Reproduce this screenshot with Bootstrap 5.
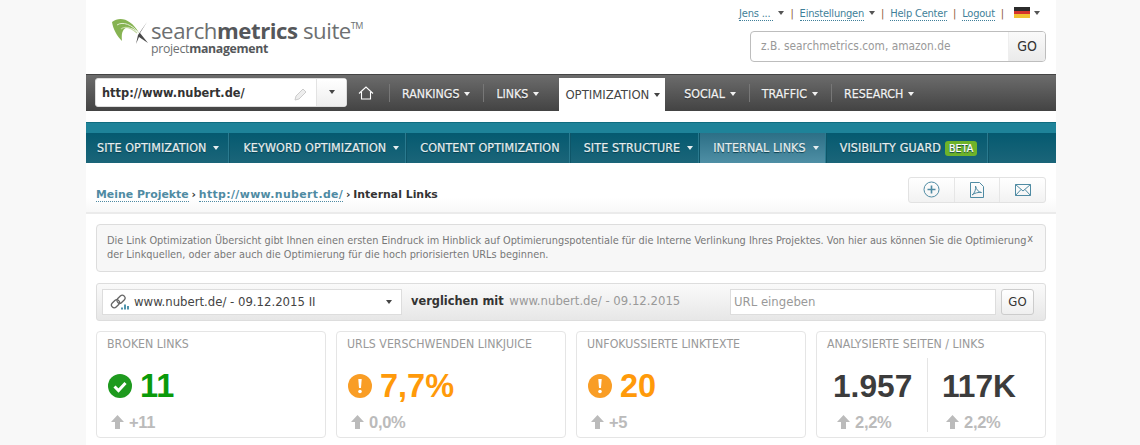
<!DOCTYPE html>
<html lang="de"><head><meta charset="utf-8">
<link href="https://cdn.jsdelivr.net/npm/bootstrap@5.3.0/dist/css/bootstrap.min.css" rel="stylesheet">
<style>
html,body{height:445px;overflow:hidden;}
body{background:#f8f8f8;font-family:"DejaVu Sans Condensed","DejaVu Sans",sans-serif;font-stretch:condensed;font-size:12px;color:#444;}
.sheet{margin-left:86px;width:970px;height:445px;background:#fff;}
.topzone{height:74px;}
.logo-mark{margin:17px 0 0 25px;}
.logo-txt{padding-top:2px;margin-left:3px;}
.logo-main{font-family:"Open Sans",sans-serif;font-stretch:normal;font-size:22.2px;line-height:24px;color:#6d6f71;letter-spacing:-.45px;white-space:nowrap;}
.logo-main b{font-weight:700;color:#55575a;}
.logo-main sup{font-size:9px;top:-1.1em;line-height:0;}
.logo-sub{font-family:"Open Sans",sans-serif;font-stretch:normal;font-size:12.3px;line-height:11px;color:#6d6f71;letter-spacing:-.3px;}
.logo-sub b{color:#55575a;}
.toplinks{height:27px;padding:6px 16px 0 0;font-size:11px;letter-spacing:-.2px;color:#555;white-space:nowrap;}
.toplinks a{color:#3f7f99;text-decoration:none;border-bottom:1px dotted #3f7f99;line-height:14px;}
.sep{margin:0 6px;color:#8a5a3a;}
.caretx{display:inline-block;border-left:3.5px solid transparent;border-right:3.5px solid transparent;border-top:4px solid currentColor;vertical-align:2px;margin-left:5px;}
.flagx{display:inline-block;width:16px;height:11px;background:linear-gradient(#2b2b2b 33%,#d5342c 33% 66%,#f1c232 66%);vertical-align:-1px;margin-left:4px;}
.searchbox{width:296px;height:31px;margin:4px 10px 0 auto;border:1px solid #bdbdbd;border-radius:4px;overflow:hidden;}
.searchbox .fake{flex:1;padding:0 10px;line-height:29px;color:#999;font-size:11.8px;white-space:nowrap;}
.searchbox .gox{width:37px;text-align:center;line-height:29px;font-size:14px;color:#333;background:linear-gradient(#fafafa,#eaeaea);border-left:1px solid #eee;}
.mainbar{height:37px;background:linear-gradient(#6c6c6c,#434343);border-top:1px solid #444;}
.urlpick{width:252px;height:29px;margin:3px 0 0 9px;background:#fff;border:1px solid #ddd;border-radius:3px;}
.urlpick .u{flex:1;padding-left:6px;line-height:29px;font-family:"DejaVu Sans",sans-serif;font-stretch:normal;font-weight:700;font-size:11.4px;color:#333;}
.urlpick .d{width:30px;border-left:1px solid #e3e3e3;background:linear-gradient(#fff,#eee);color:#444;text-align:center;line-height:26px;}
.homeit{width:42px;padding-left:11px;padding-top:8px;}
.tabm{height:36px;line-height:38px;padding:0 13px 0 13px;color:#f2f2f2;font-size:12.3px;-webkit-text-stroke:.25px #f2f2f2;background:linear-gradient(#777,#777) no-repeat left 9px/1px 18px;text-shadow:0 1px 1px #222;white-space:nowrap;}
.tabm.cur{background:#fff;color:#444;-webkit-text-stroke:0;text-shadow:none;height:33px;line-height:34px;margin:3px 6px 0 7px;padding:0 5px 0 6px;font-size:13px;}
.tabm.nosep{background:none;padding-left:13px;}
.gapstrip{height:11px;}
.subbar{height:41px;background:linear-gradient(#1e8399 0,#1e8399 10px,#055a70 10px,#1b6579 100%);border-top:1px solid #0f6d80;padding-top:10px;}
.tabs{height:30px;line-height:30px;padding:0 10px 0 13px;color:#e6eef0;font-size:12.4px;letter-spacing:.1px;-webkit-text-stroke:.2px #e6eef0;border-right:1px solid #0e5568;box-shadow:inset -1px 0 0 #2a7a8f;white-space:nowrap;text-shadow:0 1px 1px #0a3c4a;}
.tabs.car{padding-right:7px;}
.tabs.car .caretx{margin-left:7px;}
.tabs.firsty{padding-left:11px;padding-right:10px;}
.tabs.tight{padding-right:6px;}
.tabs.betatab{padding-right:11px;}
.tabs.on{background:linear-gradient(#2c6f86,#4f8fa5);}
.betax{background:#6eb32a;color:#fff;border-radius:3px;padding:1px 4px;font-size:10.6px;line-height:13px;margin-left:4px;display:inline-block;-webkit-text-stroke:.2px #fff;}
.crumbs{height:51px;padding:5px 10px 0;border-bottom:2px solid #ebebeb;background:linear-gradient(#fff 70%,#f8f8f8);}
.crumbtxt{font-family:"DejaVu Sans",sans-serif;font-stretch:normal;font-weight:700;font-size:10.9px;color:#333;padding-top:10px;}
.crumbtxt a{color:#4f8ba3;text-decoration:none;border-bottom:1px dotted #4f8ba3;}
.crumbtxt a.wideurl{letter-spacing:.38px;}
.crumbtxt span{margin:0 -1px;}
.acts{width:138px;height:26px;border:1px solid #e2e2e2;border-radius:3px;background:linear-gradient(#fff,#f2f2f2);margin-top:-1px;}
.acts span{flex:1;border-right:1px solid #e6e6e6;display:flex;align-items:center;justify-content:center;}
.acts span:last-child{border-right:0;}
.infox{margin:10px 10px 0;height:48px;background:#f7f7f7;border:1px solid #ddd;border-radius:4px;padding:9px 18px 0 10px;font-size:10.85px;line-height:13.5px;color:#777;position:relative;}
.infox i{position:absolute;right:12px;top:7px;font-style:normal;color:#777;}
.cmpbar{margin:11px 10px 0;height:38px;border:1px solid #ddd;border-radius:3px;background:linear-gradient(#fafafa,#e7e7e7);padding:5px 11px 5px 5px;}
.pickx{width:300px;height:26px;background:#fff;border:1px solid #ddd;padding:0 9px 0 7px;font-size:13px;line-height:24px;color:#444;}
.cmpx{font-size:13px;margin-left:9px;color:#999;white-space:nowrap;line-height:24px;}
.cmpx b{font-family:"DejaVu Sans",sans-serif;font-stretch:normal;color:#333;font-size:11.4px;margin-right:2px;}
.urlfake{width:266px;height:26px;background:#fff;border:1px solid #ddd;margin-left:auto;padding-left:3px;line-height:24px;font-size:13px;color:#999;}
.gobtn{width:33px;height:26px;margin-left:5px;background:linear-gradient(#fff,#efefef);border:1px solid #ccc;border-radius:3px;text-align:center;line-height:24px;font-size:13px;color:#333;}
.kpis{margin:10px 10px 0;gap:10px;}
.kpi{flex:1 1 0;height:107px;border:1px solid #e5e5e5;border-radius:4px;padding:4px 10px;min-width:0;background:#fff;}
.kpih{font-size:12.25px;line-height:16px;color:#999;white-space:nowrap;}
.bign{font-family:"Liberation Sans",Arial,sans-serif;font-stretch:normal;font-weight:700;font-size:32.5px;line-height:38px;}
.subn{font-family:"Liberation Sans",Arial,sans-serif;font-stretch:normal;font-weight:700;font-size:16.5px;letter-spacing:-.3px;line-height:20px;color:#bbb;}
.g{color:#0a9a0a}.o{color:#ff9a0a}.k{color:#3c3c3c;font-size:31.7px;}
.kv{margin-top:15px;gap:8px;padding-left:1px;}
.ks{margin-top:7px;gap:5px;padding-left:4px;}
.splitl{width:100px;margin-top:6px;padding:9px 0 0 6px;}
.splitr{flex:1;margin-top:6px;padding:9px 0 0 14px;border-left:1px solid #e5e5e5;}
.mk{flex:none;}
</style></head><body>
<div class="sheet">
 <div class="topzone d-flex justify-content-between">
  <div class="logo-mark d-flex">
   <svg width="37" height="28" viewBox="0 0 37 28" class="mk"><path d="M1 5C9-1 20 2 28 16 20 8 9 7 11 24 6 19 2 12 1 5Z" fill="#86b352"/><path d="M6 8C12 4 21 8 27 15" stroke="#e3eed4" stroke-width="1" fill="none"/><path d="M10 12C14 9 20 11 26 16" stroke="#c3daa2" stroke-width="1.200" fill="none"/><path d="M36 5 29 16 37 26 28 20 25 27 27 18Z" fill="#4a4a4a"/></svg>
   <div class="logo-txt"><div class="logo-main">search<b>metrics</b> suite<sup>TM</sup></div><div class="logo-sub">project<b>management</b></div></div>
  </div>
  <div class="d-flex flex-column">
   <div class="toplinks text-end"><a href="#">Jens ...&nbsp;</a><span class="caretx"></span><span class="sep">|</span><a href="#">Einstellungen</a><span class="caretx"></span><span class="sep">|</span><a href="#">Help Center</a><span class="sep">|</span><a href="#">Logout</a><span class="sep">|</span><span class="flagx"></span><span class="caretx ms-1"></span></div>
   <div class="searchbox d-flex"><div class="fake">z.B. searchmetrics.com, amazon.de</div><div class="gox">GO</div></div>
  </div>
 </div>
 <div class="mainbar d-flex">
  <div class="urlpick d-flex"><div class="u">http://www.nubert.de/</div>
   <svg width="14" height="14" viewBox="0 0 14 14" class="me-2 mt-2"><path d="M1 13l1-4 7-7 3 3-7 7z" fill="#eee" stroke="#ccc"/></svg>
   <div class="d"><span class="caretx m-0"></span></div></div>
  <div class="homeit"><svg width="16" height="14" viewBox="0 0 16 14"><path d="M1 7.500 8 1l7 6.500M3.500 6v7h9V6" fill="none" stroke="#fff" stroke-width="1.100"/></svg></div>
  <div class="tabm">RANKINGS<span class="caretx"></span></div>
  <div class="tabm">LINKS<span class="caretx"></span></div>
  <div class="tabm cur">OPTIMIZATION<span class="caretx"></span></div>
  <div class="tabm nosep">SOCIAL<span class="caretx"></span></div>
  <div class="tabm">TRAFFIC<span class="caretx"></span></div>
  <div class="tabm">RESEARCH<span class="caretx"></span></div>
 </div>
 <div class="gapstrip"></div>
 <div class="subbar d-flex">
  <div class="tabs car firsty">SITE OPTIMIZATION<span class="caretx"></span></div>
  <div class="tabs car">KEYWORD OPTIMIZATION<span class="caretx"></span></div>
  <div class="tabs">CONTENT OPTIMIZATION</div>
  <div class="tabs car tight">SITE STRUCTURE<span class="caretx"></span></div>
  <div class="tabs on car">INTERNAL LINKS<span class="caretx"></span></div>
  <div class="tabs betatab">VISIBILITY GUARD<span class="betax">BETA</span></div>
 </div>
 <div class="crumbs d-flex justify-content-between align-items-center">
  <div class="crumbtxt"><a href="#">Meine Projekte</a> <span>›</span> <a href="#" class="wideurl">http://www.nubert.de/</a> <span>›</span> Internal Links</div>
  <div class="acts d-flex">
   <span><svg width="17" height="17" viewBox="0 0 17 17"><circle cx="8.500" cy="8.500" r="7.500" fill="none" stroke="#4f8ba3"/><path d="M8.500 4.500v8M4.500 8.500h8" stroke="#4f8ba3" stroke-width="1.600"/></svg></span>
   <span><svg width="14" height="16" viewBox="0 0 14 16"><path d="M.5.500h9l4 4v11H.5zM2 13c3-2 4-6 3.500-9 1 4 3 6 6 6.500-3-.5-7 .5-9.500 2.500" fill="none" stroke="#4f8ba3"/></svg></span>
   <span><svg width="16" height="12" viewBox="0 0 16 12"><path d="M.5.500h15v11H.5zM.5.500 8 7l7.500-6.500M.5 11.500 6 5.500M15.500 11.500 10 5.500" fill="none" stroke="#4f8ba3"/></svg></span>
  </div>
 </div>
 <div class="infox">Die Link Optimization Übersicht gibt Ihnen einen ersten Eindruck im Hinblick auf Optimierungspotentiale für die Interne Verlinkung Ihres Projektes. Von hier aus können Sie die Optimierung der Linkquellen, oder aber auch die Optimierung für die hoch priorisierten URLs beginnen.<i>x</i></div>
 <div class="cmpbar d-flex">
  <div class="pickx d-flex align-items-center">
   <svg width="20" height="16" viewBox="0 0 20 16" class="mk me-1"><g fill="none" stroke="#666" stroke-width="1.300"><rect x="1" y="7" width="9" height="5.500" rx="2.700" transform="rotate(-45 5.500 9.750)"/><rect x="6.500" y="2.500" width="9" height="5.500" rx="2.700" transform="rotate(-45 11 5.250)"/></g><path d="M12 15.500v-2M15 15.500v-5M18 15.500v-3.500" stroke="#3f8aa5" stroke-width="1.800"/></svg>
   <span class="flex-grow-1">www.nubert.de/ - 09.12.2015 II</span><span class="caretx"></span>
  </div>
  <div class="cmpx"><b>verglichen mit</b> www.nubert.de/ - 09.12.2015</div>
  <div class="urlfake">URL eingeben</div><div class="gobtn">GO</div>
 </div>
 <div class="kpis d-flex">
  <div class="kpi"><div class="kpih">BROKEN LINKS</div>
   <div class="kv d-flex align-items-center"><svg width="24" height="24" viewBox="0 0 24 24" class="mk"><circle cx="12" cy="12" r="12" fill="#1e9a1e"/><path d="M6.500 12.500l4 4 7-7.500" fill="none" stroke="#fff" stroke-width="3"/></svg><span class="bign g">11</span></div>
   <div class="ks d-flex align-items-center"><svg width="13" height="14" viewBox="0 0 13 14" class="mk"><path d="M6.500 0 13 7H9v7H4V7H0z" fill="#bbb"/></svg><span class="subn">+11</span></div></div>
  <div class="kpi"><div class="kpih">URLS VERSCHWENDEN LINKJUICE</div>
   <div class="kv d-flex align-items-center"><svg width="24" height="24" viewBox="0 0 24 24" class="mk"><circle cx="12" cy="12" r="12" fill="#f99d25"/><path d="M10.300 5h3.400l-.7 9h-2z" fill="#fff"/><circle cx="12" cy="17.500" r="1.800" fill="#fff"/></svg><span class="bign o">7,7%</span></div>
   <div class="ks d-flex align-items-center"><svg width="13" height="14" viewBox="0 0 13 14" class="mk"><path d="M6.500 0 13 7H9v7H4V7H0z" fill="#bbb"/></svg><span class="subn">0,0%</span></div></div>
  <div class="kpi"><div class="kpih">UNFOKUSSIERTE LINKTEXTE</div>
   <div class="kv d-flex align-items-center"><svg width="24" height="24" viewBox="0 0 24 24" class="mk"><circle cx="12" cy="12" r="12" fill="#f99d25"/><path d="M10.300 5h3.400l-.7 9h-2z" fill="#fff"/><circle cx="12" cy="17.500" r="1.800" fill="#fff"/></svg><span class="bign o">20</span></div>
   <div class="ks d-flex align-items-center"><svg width="13" height="14" viewBox="0 0 13 14" class="mk"><path d="M6.500 0 13 7H9v7H4V7H0z" fill="#bbb"/></svg><span class="subn">+5</span></div></div>
  <div class="kpi"><div class="kpih">ANALYSIERTE SEITEN / LINKS</div>
   <div class="d-flex">
    <div class="splitl"><div class="bign k">1.957</div><div class="ks d-flex align-items-center"><svg width="13" height="14" viewBox="0 0 13 14" class="mk"><path d="M6.500 0 13 7H9v7H4V7H0z" fill="#bbb"/></svg><span class="subn">2,2%</span></div></div>
    <div class="splitr"><div class="bign k">117K</div><div class="ks d-flex align-items-center"><svg width="13" height="14" viewBox="0 0 13 14" class="mk"><path d="M6.500 0 13 7H9v7H4V7H0z" fill="#bbb"/></svg><span class="subn">2,2%</span></div></div>
   </div></div>
 </div>
</div>
<script src="https://cdn.jsdelivr.net/npm/bootstrap@5.3.0/dist/js/bootstrap.bundle.min.js"></script>
</body></html>
